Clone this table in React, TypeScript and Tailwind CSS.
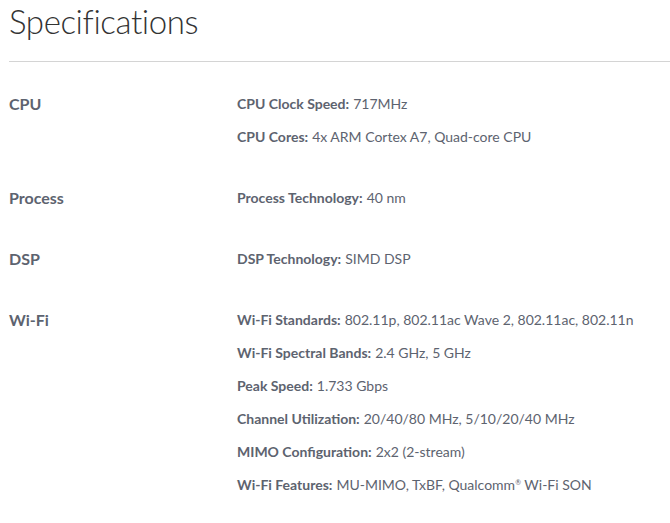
import React from 'react';

interface SpecItem {
  name: string;
  value: React.ReactNode;
}

interface SpecGroup {
  title: string;
  items: SpecItem[];
}

const groups: SpecGroup[] = [
  {
    title: 'CPU',
    items: [
      { name: 'CPU Clock Speed:', value: '717MHz' },
      { name: 'CPU Cores:', value: '4x ARM Cortex A7, Quad-core CPU' },
    ],
  },
  {
    title: 'Process',
    items: [{ name: 'Process Technology:', value: '40 nm' }],
  },
  {
    title: 'DSP',
    items: [{ name: 'DSP Technology:', value: 'SIMD DSP' }],
  },
  {
    title: 'Wi-Fi',
    items: [
      { name: 'Wi-Fi Standards:', value: '802.11p, 802.11ac Wave 2, 802.11ac, 802.11n' },
      { name: 'Wi-Fi Spectral Bands:', value: '2.4 GHz, 5 GHz' },
      { name: 'Peak Speed:', value: '1.733 Gbps' },
      { name: 'Channel Utilization:', value: '20/40/80 MHz, 5/10/20/40 MHz' },
      { name: 'MIMO Configuration:', value: '2x2 (2-stream)' },
      {
        name: 'Wi-Fi Features:',
        value: (
          <>
            MU-MIMO, TxBF, Qualcomm<sup className="text-[7px] -top-[5px]">®</sup> Wi-Fi SON
          </>
        ),
      },
    ],
  },
];

export default function App() {
  return (
    <div className="w-[670px] h-[523px] bg-white overflow-hidden pl-[9px] font-['Lato',sans-serif]">
      <h1 className="pt-[1px] h-[61px] text-[33px] leading-[40px] font-light text-[#333333] tracking-[-0.4px]">
        Specifications
      </h1>
      <div className="border-t border-[#d4d4d4]" />

      <div className="pt-[25px] flex flex-col gap-[28px]">
        {groups.map((group) => (
          <div key={group.title} className="flex">
            <div className="w-[228px] h-[33px] flex items-center text-[16px] font-bold text-[#5d636f]">
              {group.title}
            </div>
            <div className="flex flex-col">
              {group.items.map((item) => (
                <div key={item.name} className="h-[33px] flex items-center text-[14px] text-[#5d636f]">
                  <span className="font-bold">{item.name}</span>
                  <span className="ml-[4px]">{item.value}</span>
                </div>
              ))}
            </div>
          </div>
        ))}
      </div>
    </div>
  );
}
